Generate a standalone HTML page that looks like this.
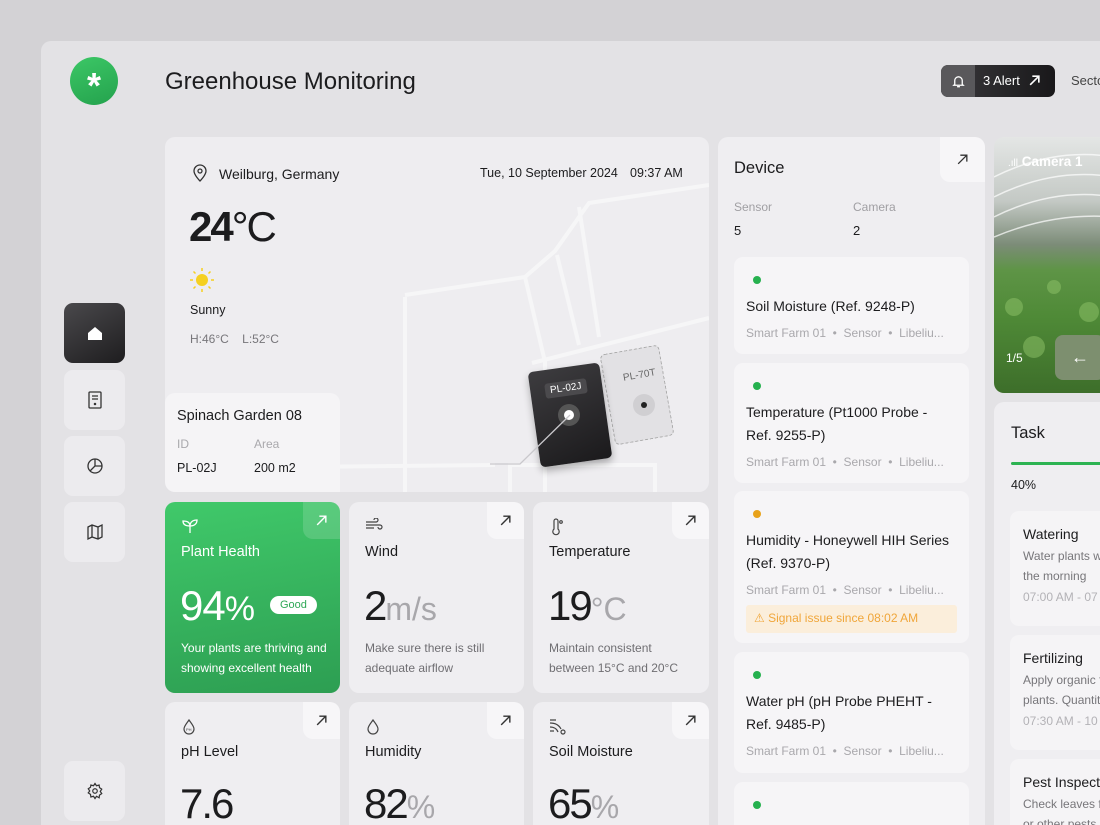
<!DOCTYPE html>
<html><head><meta charset="utf-8"><style>
*{box-sizing:border-box;margin:0;padding:0}
html,body{width:1100px;height:825px;overflow:hidden}
body{background:#d3d2d5;font-family:"Liberation Sans",sans-serif;color:#1c1c1e;position:relative}
.abs{position:absolute}
.panel{left:41px;top:41px;width:1059px;height:784px;background:#e3e2e5;border-radius:10px 0 0 0}
.card{position:absolute;background:#efeef1;border-radius:10px;overflow:hidden}
.sb{position:absolute;left:64px;width:61px;height:60px;border-radius:9px;background:#ecebee;display:flex;align-items:center;justify-content:center}
.arr{position:absolute;right:0;top:0;width:37px;height:37px;background:#f7f6f8;border-radius:0 10px 0 10px;display:flex;align-items:center;justify-content:center}
.m .t{position:absolute;left:16px;top:42px;font-size:14.5px}
.m .ic{position:absolute;left:16px;top:16px}
.m .v{position:absolute;left:15px;top:80px;font-size:42px;letter-spacing:-2px}
.m .v span{color:#a8a7ab;font-size:32px;letter-spacing:0}
.m .d{position:absolute;left:16px;top:136px;font-size:12px;line-height:20px;color:#6f6e72}
.dev{position:absolute;left:734px;width:235px;background:#f6f5f7;border-radius:9px;padding:0 12px;overflow:hidden}
.dot{width:8px;height:8px;border-radius:50%;background:#26b14f;margin:19px 0 0 7px}
.dev .n{font-size:14px;line-height:23px;margin-top:11px}
.dev .s{font-size:12px;color:#a9a8ac;margin-top:8px;white-space:nowrap}
.task{position:absolute;left:1010px;width:90px;background:#f5f4f6;border-radius:9px 0 0 9px;padding:15px 0 0 13px;white-space:nowrap;overflow:hidden}
.task .h{font-size:14px}
.task .p{font-size:12px;color:#77767a;line-height:20px;margin-top:4px}
.task .tm{font-size:12px;color:#b3b2b6;margin-top:4px}
</style></head><body>
<div class="abs panel"></div>
<div class="abs" style="left:70px;top:57px;width:48px;height:48px;border-radius:50%;background:linear-gradient(160deg,#3cc766,#24a24d);color:#fff;font-size:36px;font-weight:bold;text-align:center;line-height:58px">*</div>
<div class="abs" style="left:165px;top:68px;font-size:24px">Greenhouse Monitoring</div>
<div class="abs" style="left:941px;top:65px;width:114px;height:32px;border-radius:7px;background:linear-gradient(90deg,#3a393c,#19181a);color:#fff;font-size:13px">
<div class="abs" style="left:0;top:0;width:34px;height:32px;background:#59585b;border-radius:7px 0 0 7px;display:flex;align-items:center;justify-content:center"><svg width="15" height="15" viewBox="0 0 16 16" fill="none" stroke="#fff" stroke-width="1.4"><path d="M4 11V7a4 4 0 018 0v4l1 1H3z M6.5 13.5h3"/></svg></div>
<div class="abs" style="left:42px;top:8px">3 Alert</div>
<svg class="abs" style="left:87px;top:9px" width="13" height="13" viewBox="0 0 12 12" fill="none" stroke="#fff" stroke-width="1.5"><path d="M2 10L10 2M4 2h6v6"/></svg></div>
<div class="abs" style="left:1071px;top:73px;font-size:13px;color:#444;width:29px;overflow:hidden;white-space:nowrap">Sector</div>

<div class="sb" style="top:303px;background:linear-gradient(150deg,#4a494c,#1e1d1f)"><svg width="18" height="18" viewBox="0 0 18 18"><path d="M2 9L9 3l7 6v7H2z" fill="#fff"/></svg></div>
<div class="sb" style="top:370px"><svg width="16" height="18" viewBox="0 0 16 18" fill="none" stroke="#333" stroke-width="1.3"><rect x="2" y="1" width="12" height="16" rx="1"/><path d="M5 5h6M5 8h6"/><circle cx="8" cy="13" r=".6" fill="#333"/></svg></div>
<div class="sb" style="top:436px"><svg width="18" height="18" viewBox="0 0 18 18" fill="none" stroke="#333" stroke-width="1.3"><circle cx="9" cy="9" r="7"/><path d="M9 2v7l-5 5M9 9h7"/></svg></div>
<div class="sb" style="top:502px"><svg width="18" height="18" viewBox="0 0 18 18" fill="none" stroke="#333" stroke-width="1.3"><path d="M2 4l4-2 6 2 4-2v12l-4 2-6-2-4 2z M6 2v12 M12 4v12"/></svg></div>
<div class="sb" style="top:761px"><svg width="18" height="18" viewBox="0 0 24 24" fill="none" stroke="#333" stroke-width="1.6"><circle cx="12" cy="12" r="3"/><path d="M12 2l2 3 3.5-1 .5 3.5 3 2-2 3 2 3-3 2-.5 3.5L14 19l-2 3-2-3-3.5 1L6 16.5 3 14.5l2-2.5-2-3 3-2L6.5 4 10 5z"/></svg></div>

<div class="card" style="left:165px;top:137px;width:544px;height:355px;background:#eeedf0">
<svg class="abs" style="left:0;top:0" width="544" height="355" viewBox="0 0 544 355" fill="none" stroke="#f6f6f7" stroke-width="4">
<path d="M240 158l120-18 30-26 34-48 120-18"/><path d="M360 140l20 85 0 130"/><path d="M392 118l22 90"/><path d="M367 226l177-45"/><path d="M130 330l200-2"/><path d="M345 368l0-40 145 0 0 40"/><path d="M240 160v200"/><path d="M414 70l20 130"/>
</svg>
<div class="abs" style="left:27px;top:27px"><svg width="16" height="18" viewBox="0 0 16 18" fill="none" stroke="#333" stroke-width="1.3"><path d="M8 17s6-6 6-10A6 6 0 002 7c0 4 6 10 6 10z"/><circle cx="8" cy="7" r="2"/></svg></div>
<div class="abs" style="left:54px;top:29px;font-size:14px">Weilburg, Germany</div>
<div class="abs" style="left:315px;top:29px;font-size:12.5px">Tue, 10 September 2024</div>
<div class="abs" style="left:465px;top:29px;font-size:12.5px">09:37 AM</div>
<div class="abs" style="left:24px;top:66px;font-size:42px;letter-spacing:-2px"><b style="font-weight:600">24</b>°C</div>
<svg class="abs" style="left:25px;top:131px" width="24" height="24" viewBox="0 0 24 24"><circle cx="12" cy="12" r="6" fill="#f5d020"/><g stroke="#f5d020" stroke-width="1.5"><path d="M12 0v3M12 21v3M0 12h3M21 12h3M3.5 3.5l2 2M18.5 18.5l2 2M3.5 20.5l2-2M18.5 5.5l2-2"/></g></svg>
<div class="abs" style="left:25px;top:166px;font-size:12.5px">Sunny</div>
<div class="abs" style="left:25px;top:195px;font-size:12px;color:#77767a">H:46°C &nbsp;&nbsp; L:52°C</div>
<div class="abs" style="left:442px;top:212px;width:60px;height:92px;border:1.5px dashed #aaa;background:#e2e1e4;border-radius:5px;transform:rotate(-10deg)"></div>
<div class="abs" style="left:458px;top:233px;font-size:10px;color:#666;transform:rotate(-10deg)">PL-70T</div>
<div class="abs" style="left:468px;top:257px;width:22px;height:22px;border-radius:50%;background:#d0cfd2"><div style="margin:8px;width:6px;height:6px;border-radius:50%;background:#222"></div></div>
<div class="abs" style="left:369px;top:230px;width:72px;height:96px;background:linear-gradient(160deg,#3d3c3f,#1b1a1c);border-radius:5px;transform:rotate(-8deg);box-shadow:0 4px 8px rgba(0,0,0,.3)"></div>
<div class="abs" style="left:380px;top:244px;padding:2px 5px;font-size:10px;color:#fff;background:#4b4a4d;border-radius:3px;transform:rotate(-8deg)">PL-02J</div>
<div class="abs" style="left:393px;top:267px;width:22px;height:22px;border-radius:50%;background:#555"><div style="margin:6px;width:10px;height:10px;border-radius:50%;background:#fff"></div></div>
<svg class="abs" style="left:325px;top:275px" width="85" height="60"><path d="M80 3L30 52H0" stroke="#c9c8cc" stroke-width="1.3" fill="none"/></svg>
<div class="abs" style="left:0;top:256px;width:175px;height:99px;background:#f5f4f6;border-radius:10px 10px 0 10px;padding:15px 12px">
<div style="font-size:14.5px">Spinach Garden 08</div>
<div style="display:flex;margin-top:13px;font-size:12px;color:#a9a8ac"><span style="width:77px">ID</span><span>Area</span></div>
<div style="display:flex;margin-top:10px;font-size:12.5px"><span style="width:77px">PL-02J</span><span>200 m2</span></div></div>
</div>

<div class="card m" style="left:165px;top:502px;width:175px;height:191px;background:linear-gradient(170deg,#40c96a,#2d9e52);color:#fff">
<div class="arr" style="background:rgba(255,255,255,.15)"><svg width="13" height="13" viewBox="0 0 12 12" fill="none" stroke="#fff" stroke-width="1.3"><path d="M2 10L10 2M4 2h6v6"/></svg></div>
<svg class="ic" width="18" height="16" viewBox="0 0 18 16" fill="none" stroke="#fff" stroke-width="1.3"><path d="M9 15V8C9 4 6 3 2 3c0 4 3 5 7 5M9 8c0-4 3-6 7-6 0 4-3 6-7 6"/></svg>
<div class="t">Plant Health</div>
<div class="v" style="letter-spacing:-1px">94<span style="color:#fff;font-size:34px">%</span></div>
<div class="abs" style="left:105px;top:94px;background:#fff;color:#2fa856;border-radius:10px;font-size:11px;padding:3px 10px">Good</div>
<div class="d" style="color:#fff">Your plants are thriving and<br>showing excellent health</div></div>

<div class="card m" style="left:349px;top:502px;width:175px;height:191px">
<div class="arr"><svg width="13" height="13" viewBox="0 0 12 12" fill="none" stroke="#333" stroke-width="1.3"><path d="M2 10L10 2M4 2h6v6"/></svg></div>
<svg class="ic" width="18" height="14" viewBox="0 0 18 14" fill="none" stroke="#444" stroke-width="1.2"><path d="M1 4h10a2 2 0 10-2-2M1 7h14a2 2 0 11-2 2M1 10h8"/></svg>
<div class="t">Wind</div><div class="v">2<span>m/s</span></div>
<div class="d">Make sure there is still<br>adequate airflow</div></div>

<div class="card m" style="left:533px;top:502px;width:176px;height:191px">
<div class="arr"><svg width="13" height="13" viewBox="0 0 12 12" fill="none" stroke="#333" stroke-width="1.3"><path d="M2 10L10 2M4 2h6v6"/></svg></div>
<svg class="ic" width="16" height="18" viewBox="0 0 16 18" fill="none" stroke="#444" stroke-width="1.2"><path d="M5 11V3a2 2 0 014 0v8a3.2 3.2 0 11-4 0z"/><circle cx="12" cy="4" r="1.3"/></svg>
<div class="t">Temperature</div><div class="v">19<span>°C</span></div>
<div class="d">Maintain consistent<br>between 15°C and 20°C</div></div>

<div class="card m" style="left:165px;top:702px;width:175px;height:123px;border-radius:10px 10px 0 0">
<div class="arr"><svg width="13" height="13" viewBox="0 0 12 12" fill="none" stroke="#333" stroke-width="1.3"><path d="M2 10L10 2M4 2h6v6"/></svg></div>
<svg class="ic" width="16" height="18" viewBox="0 0 16 18" fill="none" stroke="#444" stroke-width="1.2"><path d="M8 2C6 5 3 8 3 11a5 5 0 0010 0c0-3-3-6-5-9z"/><text x="5" y="13" font-size="4" fill="#444" stroke="none">PH</text></svg>
<div class="t">pH Level</div><div class="v" style="top:78px">7.6</div></div>

<div class="card m" style="left:349px;top:702px;width:175px;height:123px;border-radius:10px 10px 0 0">
<div class="arr"><svg width="13" height="13" viewBox="0 0 12 12" fill="none" stroke="#333" stroke-width="1.3"><path d="M2 10L10 2M4 2h6v6"/></svg></div>
<svg class="ic" width="16" height="18" viewBox="0 0 16 18" fill="none" stroke="#444" stroke-width="1.2"><path d="M8 2C6 5 3 8 3 11a5 5 0 0010 0c0-3-3-6-5-9z"/></svg>
<div class="t">Humidity</div><div class="v" style="top:78px">82<span>%</span></div></div>

<div class="card m" style="left:533px;top:702px;width:176px;height:123px;border-radius:10px 10px 0 0">
<div class="arr"><svg width="13" height="13" viewBox="0 0 12 12" fill="none" stroke="#333" stroke-width="1.3"><path d="M2 10L10 2M4 2h6v6"/></svg></div>
<svg class="ic" width="18" height="18" viewBox="0 0 18 18" fill="none" stroke="#444" stroke-width="1.2"><path d="M1 2h6M1 5c5 0 9 2 11 6M1 9c4 0 7 2 8 5M1 13h4"/><circle cx="14" cy="14" r="2"/></svg>
<div class="t">Soil Moisture</div><div class="v" style="top:78px">65<span>%</span></div></div>

<div class="card" style="left:718px;top:137px;width:267px;height:688px;border-radius:10px 10px 0 0">
<div class="arr" style="width:45px;height:45px"><svg width="13" height="13" viewBox="0 0 12 12" fill="none" stroke="#333" stroke-width="1.2"><path d="M2 10L10 2M4 2h6v6"/></svg></div>
<div class="abs" style="left:16px;top:22px;font-size:16.5px">Device</div>
<div class="abs" style="left:16px;top:63px;font-size:12px;color:#a09fa3">Sensor</div>
<div class="abs" style="left:135px;top:63px;font-size:12px;color:#a09fa3">Camera</div>
<div class="abs" style="left:16px;top:86px;font-size:13px">5</div>
<div class="abs" style="left:135px;top:86px;font-size:13px">2</div>
</div>
<div class="dev" style="top:257px;height:97px"><div class="dot"></div><div class="n">Soil Moisture (Ref. 9248-P)</div><div class="s">Smart Farm 01 &nbsp;•&nbsp; Sensor &nbsp;•&nbsp; Libeliu...</div></div>
<div class="dev" style="top:363px;height:120px"><div class="dot"></div><div class="n">Temperature (Pt1000 Probe -<br>Ref. 9255-P)</div><div class="s">Smart Farm 01 &nbsp;•&nbsp; Sensor &nbsp;•&nbsp; Libeliu...</div></div>
<div class="dev" style="top:491px;height:152px"><div class="dot" style="background:#e8a21a"></div><div class="n">Humidity - Honeywell HIH Series<br>(Ref. 9370-P)</div><div class="s">Smart Farm 01 &nbsp;•&nbsp; Sensor &nbsp;•&nbsp; Libeliu...</div>
<div style="margin-top:8px;height:28px;background:#fbeedb;border-radius:3px;font-size:12px;color:#f0a63a;padding:6px 8px">⚠ Signal issue since 08:02 AM</div></div>
<div class="dev" style="top:652px;height:121px"><div class="dot"></div><div class="n">Water pH (pH Probe PHEHT -<br>Ref. 9485-P)</div><div class="s">Smart Farm 01 &nbsp;•&nbsp; Sensor &nbsp;•&nbsp; Libeliu...</div></div>
<div class="dev" style="top:782px;height:43px;border-radius:9px 9px 0 0"><div class="dot"></div></div>

<div class="card" style="left:994px;top:137px;width:106px;height:256px;border-radius:10px 0 0 10px;background:linear-gradient(180deg,#e4e6e5 0%,#c4c9c5 25%,#7c8c78 42%,#5e9446 52%,#4f8a37 70%,#3d6e2a 100%)">
<svg class="abs" style="left:0;top:0" width="120" height="256" fill="none"><g stroke="#fff" stroke-opacity=".7" stroke-width="1.5"><path d="M0 40q60-30 120-20M0 60q60-30 120-20M0 80q60-30 120-20M0 100q60-25 120-20"/></g><g fill="#8fc46a" fill-opacity=".5"><circle cx="20" cy="170" r="9"/><circle cx="60" cy="150" r="7"/><circle cx="95" cy="175" r="10"/><circle cx="40" cy="210" r="11"/><circle cx="80" cy="230" r="12"/></g></svg>
<div class="abs" style="left:14px;top:17px;font-size:13.5px;color:#fff;font-weight:bold;white-space:nowrap"><span style="font-size:10px;font-weight:normal">.ıll</span> Camera 1</div>
<div class="abs" style="left:12px;top:214px;font-size:12px;color:#fff">1/5</div>
<div class="abs" style="left:61px;top:198px;width:50px;height:45px;background:#7d8f6f;border-radius:8px;color:#fff;font-size:18px;text-align:center;line-height:45px">←</div>
</div>

<div class="card" style="left:994px;top:402px;width:106px;height:423px;border-radius:10px 0 0 0">
<div class="abs" style="left:17px;top:22px;font-size:16.5px">Task</div>
<div class="abs" style="left:17px;top:60px;width:110px;height:3px;background:#2db352;border-radius:2px"></div>
<div class="abs" style="left:17px;top:76px;font-size:12.5px">40%</div></div>
<div class="task" style="top:511px;height:115px"><div class="h">Watering</div><div class="p">Water plants w<br>the morning</div><div class="tm">07:00 AM - 07</div></div>
<div class="task" style="top:635px;height:115px"><div class="h">Fertilizing</div><div class="p">Apply organic f<br>plants. Quantity</div><div class="tm">07:30 AM - 10</div></div>
<div class="task" style="top:759px;height:66px;border-radius:9px 0 0 0"><div class="h">Pest Inspecti</div><div class="p">Check leaves f<br>or other pests</div></div>
</body></html>
